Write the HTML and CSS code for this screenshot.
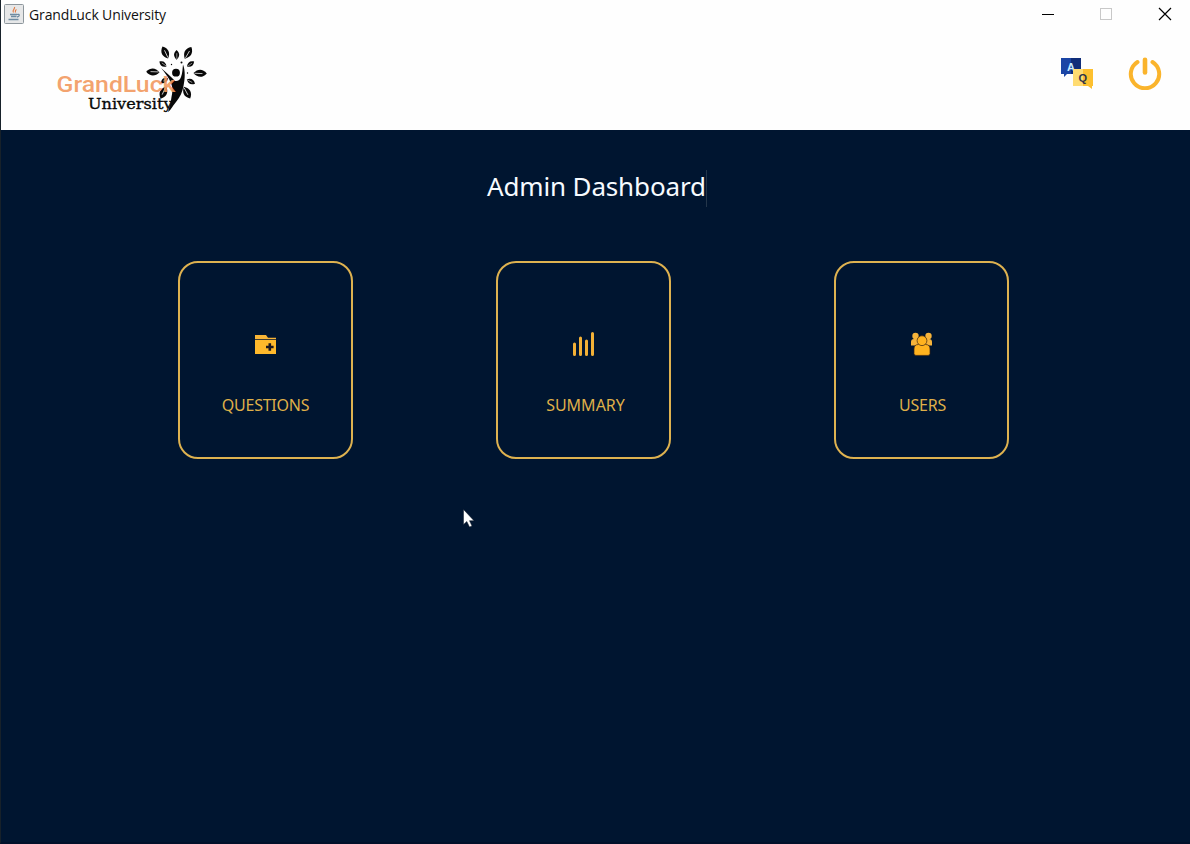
FILE: index.html
```html
<!DOCTYPE html>
<html lang="en">
<head>
<meta charset="utf-8">
<title>GrandLuck University</title>
<link rel="stylesheet" href="styles.css">
</head>
<body>
<div class="window">
  <header class="titlebar">
    <svg class="app-icon" viewBox="0 0 20 20">
      <rect x=".5" y=".5" width="19" height="19" rx="1" fill="#e6e7e8" stroke="#8d969c"/>
      <path d="M10.500 3c1 2-3 3-1 5.500M12.500 5.500c-2 1-1 2-1 3" fill="none" stroke="#e07e48" stroke-width="1.200"/>
      <path d="M6 10.500h7M7 12.500h5.500M4.500 15.500h10M13 10.500c3-1 3 2 0 2.500" fill="none" stroke="#6d8ba1" stroke-width="1.300"/>
    </svg>
    <span class="app-name">GrandLuck University</span>
    <div class="controls">
      <svg viewBox="0 0 14 14"><path d="M1 7.500h12" stroke="#000"/></svg>
      <svg viewBox="0 0 14 14"><rect x="1.500" y="1.500" width="11" height="11" fill="none" stroke="#c8c8c8"/></svg>
      <svg viewBox="0 0 14 14"><path d="M1 1l12 12M13 1L1 13" stroke="#000" stroke-width="1.200"/></svg>
    </div>
  </header>
  <div class="brandbar">
    <svg class="logo" viewBox="50 40 165 80">
      <defs>
        <g id="leaf"><path d="M0-6.800C5-2.500 4.500 2.500 0 6.500C-4.500 2.500-5-2.500 0-6.800Z" fill="#080808"/><path d="M.3-2.500L.3 5.500" stroke="#fff" stroke-width=".7"/></g>
      </defs>
      <use href="#leaf" transform="translate(165.300 52.700) rotate(-25)"/>
      <use href="#leaf" transform="translate(176.600 55) scale(.72)"/>
      <use href="#leaf" transform="translate(188 53) rotate(30)"/>
      <use href="#leaf" transform="translate(163 64) rotate(-55) scale(.65)"/>
      <use href="#leaf" transform="translate(190.500 64) rotate(55) scale(.65)"/>
      <use href="#leaf" transform="translate(153 72) rotate(-88)"/>
      <use href="#leaf" transform="translate(200 73.200) rotate(92)"/>
      <use href="#leaf" transform="translate(190.800 81.500) rotate(118) scale(.7)"/>
      <use href="#leaf" transform="translate(187 92.500) rotate(152)"/>
      <use href="#leaf" transform="translate(163.500 92.500) rotate(205)"/>
      <use href="#leaf" transform="translate(164.500 80.500) rotate(235) scale(.65)"/>
      <g fill="#080808">
        <circle cx="176" cy="72.700" r="3.900"/>
        <circle cx="171.500" cy="64.500" r=".7"/><circle cx="181.500" cy="62.500" r="1"/><circle cx="187.500" cy="73" r=".7"/>
        <path d="M161 68C166 72 171 77 175 81C178 81.500 180 80 181 77C182.500 73 182.500 69 183 64.500C185.500 71 185 79 183.500 86C182.500 92 180 97 176 102C172.500 106 171 110 168 112C169.500 106 171 102 171.500 97C172.500 92 173 88 171 83C168.500 77 165 73 161 68Z"/>
      </g>
      <text class="logo-name" x="56.500" y="92" textLength="119" lengthAdjust="spacingAndGlyphs">GrandLuck</text>
      <text class="logo-sub" x="88" y="108.700" textLength="84.500" lengthAdjust="spacingAndGlyphs">University</text>
    </svg>
    <div class="actions">
      <svg class="qa" viewBox="0 0 33 33">
        <path d="M1 1h10v16H7l-3 3v-3H1z" fill="#1b45a5"/><path d="M11 1h10v16H11z" fill="#102d79"/>
        <text x="7" y="13.500" class="qa-a">A</text>
        <path d="M13 12h10v17H13z" fill="#ffdc72"/><path d="M23 12h10v17h-1v3l-4-3h-5z" fill="#fdc02f"/>
        <text x="18.500" y="25" class="qa-q">Q</text>
      </svg>
      <svg class="power" viewBox="0 0 34 34">
        <path d="M9.500 6A14.200 14.200 0 1 0 24.500 6" fill="none" stroke="#fab42c" stroke-width="4" stroke-linecap="round"/>
        <path d="M17 3.700v12.800" stroke="#fab42c" stroke-width="4.600" stroke-linecap="round"/>
      </svg>
    </div>
  </div>
  <main class="dashboard">
    <h1 class="heading">Admin Dashboard</h1>
    <div class="cards">
      <section class="card questions">
        <svg viewBox="0 0 24 26"><path d="M1 4h11l2 2.700h8v1.500H1z" fill="#f9b536"/><path d="M1 9h21v14H1z" fill="#ffb92b"/><path d="M15.800 12.200v7.600M12 16h7.600" stroke="#1c1820" stroke-width="2.600"/></svg>
        <span class="label">QUESTIONS</span>
      </section>
      <section class="card summary">
        <svg viewBox="0 0 24 26"><path d="M2.500 13v10.500M8.500 7v16.500M14.500 10v13.500M20.500 2.500v21" stroke="#f3b137" stroke-width="3" stroke-linecap="round"/></svg>
        <span class="label">SUMMARY</span>
      </section>
      <section class="card users">
        <svg viewBox="0 0 24 26"><g fill="#f7b43a"><circle cx="5.500" cy="5" r="3.200"/><circle cx="18.500" cy="5" r="3.200"/><path d="M1 14.500V11q0-3 3-3h15q3 0 3 3v3.500z"/></g><g fill="#ffb31f" stroke="#392213" stroke-width=".7"><path d="M4 22.500V18q0-4.500 4.500-4.500h7q4.500 0 4.500 4.500v4.500q0 1.900-2 1.900H6q-2 0-2-1.900z"/><circle cx="12" cy="9.700" r="4.900"/></g></svg>
        <span class="label">USERS</span>
      </section>
    </div>
  </main>
  <svg class="cursor" viewBox="0 0 12 19"><path d="M.5.500v15l3.300-3 2.700 5.500 2.500-1-2.500-5.300h4.500z" fill="#fff" stroke="#101a28" stroke-width=".5"/></svg>
</div>
</body>
</html>
```
FILE: styles.css
```css
body { margin: 0; background: #001530; overflow: hidden; }
.window { box-sizing: border-box; width: 1190px; height: 844px; display: flex; flex-direction: column; border-left: 1px solid #17212a; border-bottom: 2px solid #00102a; background: #001530; position: relative; }
.titlebar { height: 30px; background: #fefefe; display: flex; align-items: center; box-sizing: border-box; padding: 0 18px 2px 3px; }
.app-icon { width: 20px; height: 20px; }
.app-name { margin-left: 5px; padding-top: 2px; font: 14px/20px "Open Sans", sans-serif; letter-spacing: -0.13px; color: #111; }
.controls { margin-left: auto; display: flex; gap: 45px; }
.controls svg { width: 14px; height: 14px; }
.controls svg:first-child { margin-right: -1px; }
.brandbar { height: 100px; background: #fefefe; display: flex; justify-content: space-between; align-items: flex-start; box-sizing: border-box; padding: 10px 28px 0 49px; }
.logo { width: 165px; height: 80px; }
.logo-name { font: 500 22px "Roboto", sans-serif; fill: #f29a61; fill-opacity: .93; }
.logo-sub { font: 15.5px "DejaVu Serif", serif; fill: #080808; stroke: #080808; stroke-width: .35px; }
.actions { display: flex; gap: 35px; padding-top: 16px; }
.qa { width: 33px; height: 33px; padding-top: 1px; }
.qa-a { font: bold 11px "Liberation Sans", sans-serif; fill: #c9ecff; }
.qa-q { font: bold 11px "Liberation Sans", sans-serif; fill: #30334b; }
.power { width: 34px; height: 34px; }
.dashboard { flex: 1; display: flex; flex-direction: column; }
.heading { margin: 40px 0 0 486px; width: 219px; height: 37px; border-right: 1px solid #24364a; font: 400 26px/32px "Noto Sans", sans-serif; letter-spacing: -0.15px; color: #f7fbff; white-space: nowrap; }
.cards { display: flex; margin: 54px 0 0 177px; }
.card { box-sizing: border-box; width: 175px; height: 198px; border: 2px solid #deb250; border-radius: 20px; display: flex; flex-direction: column; align-items: center; padding-top: 68px; }
.summary { margin-left: 143px; }
.users { margin-left: 163px; }
.card svg { width: 24px; height: 26px; }
.label { margin-top: 37px; font: 16px/22px "Noto Sans", sans-serif; letter-spacing: -0.25px; color: #dfaf49; }
.summary .label { padding-left: 4px; letter-spacing: 0; }
.users .label { padding-left: 2px; }
.cursor { position: absolute; left: 462px; top: 509px; width: 12px; height: 19px; }
```
